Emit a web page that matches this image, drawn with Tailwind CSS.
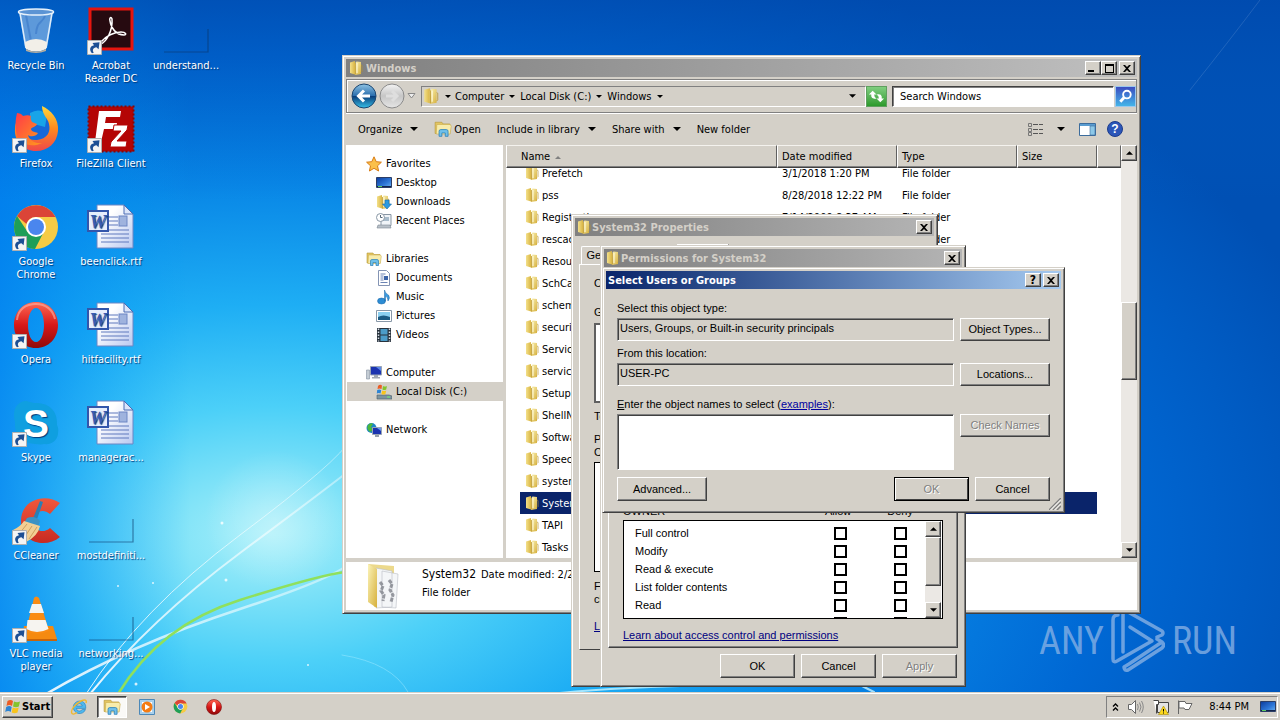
<!DOCTYPE html>
<html lang="en">
<head>
  <meta charset="UTF-8" />
  <meta name="viewport" content="width=device-width, initial-scale=1" />
  <title>Desktop</title>
  <script src="https://cdn.jsdelivr.net/npm/@tailwindcss/browser@4"></script>
</head>
<body class="relative flex h-screen flex-col overflow-hidden bg-[#0a78dc] font-['DejaVu_Sans_Condensed',sans-serif] text-[11px] leading-[13px] text-black">

  <!-- icon sprite -->
  <svg class="absolute size-0" aria-hidden="true">
    <defs>
      <linearGradient id="gFolder" x1="0" y1="0" x2="1" y2="0"><stop offset="0" stop-color="#f3e08a"/><stop offset="1" stop-color="#d9b544"/></linearGradient>
      <linearGradient id="gFolder2" x1="0" y1="0" x2="1" y2="1"><stop offset="0" stop-color="#fbf3b8"/><stop offset="1" stop-color="#d6b03c"/></linearGradient>
      <linearGradient id="gDoc" x1="0" y1="0" x2="1" y2="1"><stop offset="0.3" stop-color="#fff"/><stop offset="1" stop-color="#b9c8f0"/></linearGradient>
      <linearGradient id="gScreen" x1="0" y1="0" x2="1" y2="1"><stop offset="0" stop-color="#0a3a9c"/><stop offset="0.6" stop-color="#2f78d8"/><stop offset="1" stop-color="#6fb4f0"/></linearGradient>
      <linearGradient id="gOpera" x1="0" y1="0" x2="0" y2="1"><stop offset="0" stop-color="#ff6a55"/><stop offset="0.5" stop-color="#d81818"/><stop offset="1" stop-color="#8f0a0a"/></linearGradient>
    </defs>
    <symbol id="folder" viewBox="0 0 16 16">
      <path d="M2 2.500 7 1v13.500L2 13z" fill="url(#gFolder)"/>
      <path d="M7 3.500 8.500 1.500 13 2v12l-6 1z" fill="url(#gFolder2)"/>
      <path d="M7.500 3v11.500M13 5l1 .5v6l-1 1" stroke="#b8922c" stroke-width=".7" fill="none"/>
      <path d="M9 3v10" stroke="#fffbe0" stroke-width="1"/>
    </symbol>
    <symbol id="library" viewBox="0 0 16 16">
      <path d="M1 2h6l1 1.500h6V12H1z" fill="#e3c562" stroke="#b79a3a" stroke-width=".6"/>
      <path d="M2.500 4h12l.8 1.500-1 7H2z" fill="#f7ecac" stroke="#c8aa48" stroke-width=".5"/>
      <path d="M4.500 14.500V10q0-1.500 1.500-1.500h5q1.500 0 1.500 1.500v4.500H10v-3H7v3z" fill="#6fc0ea" stroke="#2a80b8" stroke-width=".7"/>
    </symbol>
    <symbol id="shortcut" viewBox="0 0 15 15">
      <path d="M.5.5h14v14H.5z" fill="#f4f4f4" stroke="#b0b0b0"/>
      <path d="M5 13.200C1.800 9.500 3 6 7 5.200L5.500 3l7-.8-.9 7-2.200-2C6 7.800 5 10 6.800 12.800z" fill="#1d4f94"/>
    </symbol>
    <symbol id="word" viewBox="0 0 48 48">
      <path d="M10 2h27l9 9v34H10z" fill="url(#gDoc)" stroke="#6d86c4" stroke-width="1"/>
      <path d="M37 2v9h9z" fill="#dbe5fa" stroke="#4d6cb4" stroke-width="1"/>
      <path d="M22 14h9M22 18h9M22 22h9M14 27h28M14 31h28M14 35h28M14 39h28" stroke="#5f78bd" stroke-width="1"/>
      <rect x="32" y="13" width="8" height="10" fill="#9fb3de" stroke="#6d86c4"/>
      <path d="M1 8h20v20H1z" fill="#e6edfc" stroke="#3356ab" stroke-width="2"/>
      <text x="11" y="25" text-anchor="middle" font-family="Liberation Serif, serif" font-weight="700" font-style="italic" font-size="19" fill="#3a5bb0">W</text>
    </symbol>
    <symbol id="ghost" viewBox="0 0 48 48">
      <path d="M2 45h44V22" fill="none" stroke="#0b3566" stroke-opacity=".55" stroke-width="1.200"/>
    </symbol>
    <symbol id="chrome" viewBox="0 0 48 48">
      <circle cx="24" cy="24" r="22" fill="#f6cb45"/>
      <path d="M5 13A22 22 0 0 1 43.500 14H24a10 10 0 0 0-9.500 7z" fill="#db4437"/>
      <path d="M5 13A22 22 0 0 0 23 46l9-17.500A10 10 0 0 1 15 28z" fill="#1e9e58"/>
      <circle cx="24" cy="24" r="10" fill="#fff"/>
      <circle cx="24" cy="24" r="8" fill="#4a86ee"/>
    </symbol>
    <symbol id="monitor" viewBox="0 0 16 16">
      <path d="M.5 2.500h15v10H.5z" fill="url(#gScreen)" stroke="#2c3e66"/>
      <path d="M1 11h14v1H1z" fill="#14244c"/><path d="M2 11h4v1H2z" fill="#5ecf60"/>
    </symbol>
    <symbol id="down" viewBox="0 0 8 4"><path d="M0 0h8L4 4z"/></symbol>
    <symbol id="close" viewBox="0 0 8 7"><path d="M0 0h2l2 2 2-2h2L5 3.500 8 7H6L4 5 2 7H0l3-3.500z"/></symbol>
  </svg>

  <!-- wallpaper -->
  <svg class="absolute inset-0 size-full" viewBox="0 0 1280 720" preserveAspectRatio="none" aria-hidden="true">
    <defs>
      <radialGradient id="sky" gradientUnits="userSpaceOnUse" cx="0" cy="0" r="1" gradientTransform="translate(270 535) scale(1120 640)">
        <stop offset="0" stop-color="#a8f0fa"/><stop offset=".08" stop-color="#84e4f8"/><stop offset=".2" stop-color="#4cd0f8"/><stop offset=".36" stop-color="#1eaef4"/><stop offset=".55" stop-color="#0886e6"/><stop offset=".75" stop-color="#0068d4"/><stop offset="1" stop-color="#0050b4"/>
      </radialGradient>
      <linearGradient id="leftSide"><stop offset="0" stop-color="#0080f0" stop-opacity=".75"/><stop offset="1" stop-color="#00a0f8" stop-opacity="0"/></linearGradient>
      <linearGradient id="topSide" x2="0" y2="1"><stop offset="0" stop-color="#0048ac" stop-opacity=".6"/><stop offset="1" stop-color="#0060c8" stop-opacity="0"/></linearGradient>
      <linearGradient id="ray" x1="0" y1="1" x2="1" y2="0"><stop offset="0" stop-color="#fff" stop-opacity=".9"/><stop offset="1" stop-color="#fff" stop-opacity=".4"/></linearGradient>
      <radialGradient id="orb"><stop offset="0" stop-color="#fff" stop-opacity=".3"/><stop offset="1" stop-color="#fff" stop-opacity="0"/></radialGradient>
    </defs>
    <path fill="url(#sky)" d="M0 0h1280v720H0z"/>
    <path fill="url(#leftSide)" d="M0 0h190v720H0z"/>
    <path fill="url(#topSide)" d="M0 0h1280v200H0z"/>
    <circle cx="275" cy="520" r="70" fill="url(#orb)"/>
    <g fill="none" stroke-linecap="round">
      <path d="M46 694Q130 645 240 609T350 560" stroke="url(#ray)" stroke-width="2.500"/>
      <path d="M86 694Q140 610 240 535T350 440" stroke="url(#ray)" stroke-width="1"/>
      <path d="M90 694Q150 620 240 553T350 470" stroke="url(#ray)" stroke-width="2"/>
      <path d="M118 694Q160 625 240 600T345 572" stroke="#8fe05c" stroke-width="2.500"/>
      <path d="M342 655q50 8 66 37" stroke="#9feaff" stroke-opacity=".5" stroke-width="1"/>
      <path d="M1190 90q40-50 70-90" stroke="#fff" stroke-opacity=".12"/>
      <path d="M560 693q60-6 160-8M850 680l24 12" stroke="#c8f4ff" stroke-opacity=".8" stroke-width="2"/>
    </g>
    <g fill="#fff" fill-opacity=".8"><circle cx="222" cy="523" r="1.500"/><circle cx="226" cy="580" r="1.500"/><circle cx="136" cy="684" r="1.500"/><circle cx="118" cy="586" r="1"/><circle cx="153" cy="583" r="1"/><circle cx="308" cy="665" r="1"/></g>
  </svg>

  <!-- desktop -->
  <main class="relative min-h-0 flex-1">
    <ul class="grid w-max auto-cols-[72px] grid-flow-col grid-rows-[repeat(7,98px)] gap-x-[3px] text-white [text-shadow:1px_1px_1px_#003878]">
      <li><a href="#" class="flex flex-col items-center pt-[7px] text-center">
        <span class="relative mb-1 block size-12">
          <svg class="size-12" viewBox="0 0 48 48">
            <path d="M7 5h34l-6 36q-11 5-22 0z" fill="#a9c8ea" fill-opacity=".55"/>
            <path d="M8 6l6 35M40 6l-6 35" stroke="#dcecfa" stroke-width="1.500" fill="none"/>
            <path d="M14 8l5 26M33 9c-3 8-8 4-9 18" stroke="#3a78c8" stroke-opacity=".6" stroke-width="2" fill="none"/>
            <ellipse cx="24" cy="5" rx="17.500" ry="3" fill="#5c94d4" stroke="#e6f1fb" stroke-width="1.500"/>
            <path d="M13 35q11-6 22 0l-1 7q-10 5-20 0z" fill="#f2efe8"/>
            <path d="M14 42q10 5 20 0v2q-10 4-20 0z" fill="#b4ada0"/>
          </svg>
        </span>Recycle Bin</a></li>
      <li><a href="#" class="flex flex-col items-center pt-[7px] text-center">
        <span class="relative mb-1 block size-12">
          <svg class="size-12" viewBox="0 0 48 48">
            <defs><linearGradient id="ffBody" x2="0" y2="1"><stop offset="0" stop-color="#ffd83a"/><stop offset=".5" stop-color="#ff8a1e"/><stop offset="1" stop-color="#f0484a"/></linearGradient><linearGradient id="ffFace" x2="1" y2="1"><stop offset="0" stop-color="#ff3a48"/><stop offset="1" stop-color="#ff9a1c"/></linearGradient></defs>
            <circle cx="25" cy="22" r="16" fill="#1668d8"/><path d="M18 8q10-6 17 2l-2 12-15-4z" fill="#18a4e8"/>
            <path d="M30 1c9 4 17 13 16 25C45 38 36 46 24 46 11 46 2 36 3 24c0-4 1-6 2-9 4 14 10 21 20 20 10-1 14-8 12-16-1-6-7-9-7-18z" fill="url(#ffBody)"/>
            <path d="M5 8c2 0 5 1 6 3 3-1 6-1 8 0-1 2 0 4 1 6l5 2c-1 3-5 3-6 5 0 2 3 3 7 4-2 4-8 4-10 2 1 5 7 9 14 8-12 6-24 0-26-12C3 19 4 12 5 8z" fill="url(#ffFace)"/>
          </svg>
          <svg class="absolute bottom-0 left-0 size-[15px]"><use href="#shortcut"/></svg>
        </span>Firefox</a></li>
      <li><a href="#" class="flex flex-col items-center pt-[7px] text-center">
        <span class="relative mb-1 block size-12">
          <svg class="size-12"><use href="#chrome"/></svg>
          <svg class="absolute bottom-0 left-0 size-[15px]"><use href="#shortcut"/></svg>
        </span>Google<br />Chrome</a></li>
      <li><a href="#" class="flex flex-col items-center pt-[7px] text-center">
        <span class="relative mb-1 block size-12">
          <svg class="size-12" viewBox="0 0 48 48">
            <path fill="url(#gOpera)" fill-rule="evenodd" d="M24 1c13 0 22 10 22 23S37 47 24 47 2 37 2 24 11 1 24 1zm0 6c-5 0-8 8-8 17s3 17 8 17 8-8 8-17-3-17-8-17z"/>
            <path d="M5 19C6 8 14 3 24 3s17 6 19 15" fill="none" stroke="#ffb4a4" stroke-opacity=".6" stroke-width="2"/>
          </svg>
          <svg class="absolute bottom-0 left-0 size-[15px]"><use href="#shortcut"/></svg>
        </span>Opera</a></li>
      <li><a href="#" class="flex flex-col items-center pt-[7px] text-center">
        <span class="relative mb-1 block size-12">
          <svg class="size-12" viewBox="0 0 48 48">
            <path d="M13 2c4 0 6 2 11 2 14 0 22 9 21 22 2 4 1 7 1 9-1 7-7 11-14 10-3 1-6 0-9 0C9 44 2 35 3 23 0 12 4 3 13 2z" fill="#0f9fe0"/>
            <text x="24" y="38" text-anchor="middle" font-family="Liberation Sans, sans-serif" font-weight="700" font-size="39" fill="#fff">S</text>
          </svg>
          <svg class="absolute bottom-0 left-0 size-[15px]"><use href="#shortcut"/></svg>
        </span>Skype</a></li>
      <li><a href="#" class="flex flex-col items-center pt-[7px] text-center">
        <span class="relative mb-1 block size-12">
          <svg class="size-12" viewBox="0 0 48 48">
            <defs><linearGradient id="cc" x2="0" y2="1"><stop offset="0" stop-color="#f0583c"/><stop offset="1" stop-color="#c82a22"/></linearGradient></defs>
            <path d="M48 6 38 17c-8-7-17-1-17 7s9 14 17 7l10 9C34 52 9 46 9 24S34-4 48 6z" fill="url(#cc)"/>
            <path d="M28 4l3 1-7 20-4-1z" fill="#2a7fb4"/>
            <path d="M15 21q8-3 13 3l-2 6-14-4z" fill="#3c92c4"/>
            <path d="M12 24l16 5q-2 10-14 16L1 33q7-3 11-9z" fill="#f2cf94"/><path d="M15 27l-8 10M20 29l-8 12M25 30l-8 12" stroke="#cf9f5c"/>
          </svg>
          <svg class="absolute bottom-0 left-0 size-[15px]"><use href="#shortcut"/></svg>
        </span>CCleaner</a></li>
      <li><a href="#" class="flex flex-col items-center pt-[7px] text-center">
        <span class="relative mb-1 block size-12">
          <svg class="size-12" viewBox="0 0 48 48">
            <path d="M12 31h29l4 13q0 2-2 2H10z" fill="#f58a10"/><path d="M10 44h35v2H10z" fill="#c8640a"/>
            <path d="M22 3q2-3 5 0l10 33q-12 6-23 0z" fill="#fa8c14"/>
            <path d="M20 9h9l3 9H17zM15.500 25h18l3 9q-12 6-22 0z" fill="#f6f4f0"/>
          </svg>
          <svg class="absolute bottom-0 left-0 size-[15px]"><use href="#shortcut"/></svg>
        </span>VLC media<br />player</a></li>
      <li><a href="#" class="flex flex-col items-center pt-[7px] text-center">
        <span class="relative mb-1 block size-12">
          <svg class="size-12" viewBox="0 0 48 48">
            <path d="M3 2h42v40H3z" fill="#260a10" stroke="#e5150f" stroke-width="3"/>
            <path d="M14 37c5-2 12-13 11-25-1-3-3-1-2 2 1 7 6 14 14 14 3 0 2-3-3-3-7 0-15 4-20 10-2 3 0 3 0 2z" fill="none" stroke="#fff" stroke-width="1.500"/>
          </svg>
          <svg class="absolute bottom-0 left-0 size-[15px]"><use href="#shortcut"/></svg>
        </span>Acrobat<br />Reader DC</a></li>
      <li><a href="#" class="flex flex-col items-center pt-[7px] text-center whitespace-nowrap">
        <span class="relative mb-1 block size-12">
          <svg class="size-12" viewBox="0 0 48 48">
            <path d="M1.500 1.500h45v45h-45z" fill="#b40505" stroke="#8c0404" stroke-width="2" stroke-dasharray="2 2"/>
            <path d="M12 6h22l-1 6H19l-1 6h12l-1 6H17l-3 13H8z" fill="#fff"/><path d="M27 20h14l-1 5-10 11h10l-1 6H23l1-5 10-11h-8z" fill="#fff" stroke="#b40505"/>
          </svg>
          <svg class="absolute bottom-0 left-0 size-[15px]"><use href="#shortcut"/></svg>
        </span>FileZilla Client</a></li>
      <li><a href="#" class="flex flex-col items-center pt-[7px] text-center"><svg class="mb-1 size-12"><use href="#word"/></svg>beenclick.rtf</a></li>
      <li><a href="#" class="flex flex-col items-center pt-[7px] text-center"><svg class="mb-1 size-12"><use href="#word"/></svg>hitfacility.rtf</a></li>
      <li><a href="#" class="flex flex-col items-center pt-[7px] text-center"><svg class="mb-1 size-12"><use href="#word"/></svg>managerac...</a></li>
      <li><a href="#" class="flex flex-col items-center pt-[7px] text-center"><svg class="mb-1 size-12"><use href="#ghost"/></svg>mostdefiniti...</a></li>
      <li><a href="#" class="flex flex-col items-center pt-[7px] text-center"><svg class="mb-1 size-12"><use href="#ghost"/></svg>networking...</a></li>
      <li><a href="#" class="flex flex-col items-center pt-[7px] text-center"><svg class="mb-1 size-12"><use href="#ghost"/></svg>understand...</a></li>
    </ul>

    <!-- watermark -->
    <div class="absolute top-[608px] left-[1039px] flex items-center gap-[7px] font-['Roboto_Condensed','Roboto',sans-serif] text-[38px] leading-[66px] text-[#86b0e4]/80">
      <span>ANY</span>
      <svg class="h-[66px] w-[54px]" viewBox="0 0 54 66" fill="none" stroke="#86b0e4" stroke-opacity=".8" stroke-width="3.500" stroke-linejoin="round" stroke-linecap="round">
        <path d="M7 7q-5 0-5 5v39q0 4 4 2l35-20-22-14"/>
        <path d="M12 44V7q0-6 5-3l34 19q2 2 0 4l-5 2M51 34 18 56l-5 3q0 4 4 3l34-22q3-3 0-6l-5-3"/>
      </svg>
      <span>RUN</span>
    </div>

    <!-- explorer window -->
    <section aria-label="Windows" class="absolute top-[55px] left-[342px] flex h-[559px] w-[799px] flex-col border border-t-[#d4d0c8] border-r-[#404040] border-b-[#404040] border-l-[#d4d0c8] bg-[#d4d0c8] p-[3px] shadow-[inset_1px_1px_0_#fff,inset_-1px_-1px_0_#808080]">
      <header class="flex h-[18px] shrink-0 items-center gap-[2px] bg-linear-to-r from-[#808080] to-[#c0c0c0] px-[2px] font-bold text-[#d4d0c8]">
        <svg class="size-4"><use href="#folder"/></svg>
        <h1 class="flex-1">Windows</h1>
        <div class="flex">
          <button aria-label="Minimize" class="flex h-[14px] w-4 items-end justify-center border border-t-white border-r-[#404040] border-b-[#404040] border-l-white bg-[#d4d0c8] pb-[2px] shadow-[inset_-1px_-1px_0_#808080]"><span class="mr-1 h-[2px] w-[6px] bg-black"></span></button>
          <button aria-label="Maximize" class="flex h-[14px] w-4 items-center justify-center border border-t-white border-r-[#404040] border-b-[#404040] border-l-white bg-[#d4d0c8] shadow-[inset_-1px_-1px_0_#808080]"><span class="h-[9px] w-[9px] border border-t-2 border-black"></span></button>
          <button aria-label="Close" class="ml-[2px] flex h-[14px] w-4 items-center justify-center border border-t-white border-r-[#404040] border-b-[#404040] border-l-white bg-[#d4d0c8] shadow-[inset_-1px_-1px_0_#808080]"><svg class="h-[7px] w-2"><use href="#close"/></svg></button>
        </div>
      </header>

      <nav aria-label="Address" class="mt-[2px] flex h-[34px] shrink-0 items-center border border-[#808080] pl-1 shadow-[inset_1px_1px_0_#fff,0_1px_0_#fff]">
        <button aria-label="Back" class="size-[26px]">
          <svg class="size-[26px]" viewBox="0 0 26 26">
            <defs><linearGradient id="gBack" x2="0" y2="1"><stop offset="0" stop-color="#8fc4e4"/><stop offset=".48" stop-color="#2c6fae"/><stop offset=".52" stop-color="#0a3f7c"/><stop offset="1" stop-color="#38c0e8"/></linearGradient></defs>
            <circle cx="13" cy="13" r="12" fill="url(#gBack)" stroke="#1c4670"/><path d="M19 13H8M13 7.500 7.500 13l5.500 5.500" fill="none" stroke="#fff" stroke-width="3"/>
          </svg>
        </button>
        <button aria-label="Forward" disabled class="ml-[2px] size-[26px]">
          <svg class="size-[26px]" viewBox="0 0 26 26"><defs><linearGradient id="gFwd" x2="0" y2="1"><stop offset="0" stop-color="#f4f4f4"/><stop offset=".5" stop-color="#c6c6c6"/><stop offset="1" stop-color="#e6e6e6"/></linearGradient></defs><circle cx="13" cy="13" r="12" fill="url(#gFwd)" stroke="#8a8a8a"/><path d="M7 13h11M13 8l5 5-5 5" fill="none" stroke="#dedede" stroke-width="3"/></svg>
        </button>
        <button aria-label="Recent pages" class="ml-[2px] w-[9px]"><svg class="h-[6px] w-[9px]" viewBox="0 0 9 6"><path d="M1 .5h7L4.500 5z" fill="#eee" stroke="#888"/></svg></button>
        <div class="ml-[5px] flex h-[21px] flex-1 items-center border border-t-[#808080] border-r-white border-b-white border-l-[#808080]">
          <svg class="size-[18px]"><use href="#folder"/></svg>
          <svg class="mr-1 ml-[5px] h-[3px] w-[6px]"><use href="#down"/></svg>
          <a href="#">Computer</a>
          <svg class="mx-[5px] h-[3px] w-[6px]"><use href="#down"/></svg>
          <a href="#">Local Disk (C:)</a>
          <svg class="mx-[5px] h-[3px] w-[6px]"><use href="#down"/></svg>
          <a href="#">Windows</a>
          <svg class="mx-[5px] h-[3px] w-[6px]"><use href="#down"/></svg>
          <button aria-label="Previous locations" class="mr-[9px] ml-auto"><svg class="h-1 w-[7px]"><use href="#down"/></svg></button>
        </div>
        <button aria-label="Refresh" class="size-[21px] border border-[#5f9f5f] bg-linear-to-b from-[#7fce7f] to-[#2a9a2a]">
          <svg class="size-[19px]" viewBox="0 0 20 20"><path d="M4.500 10V8H2l4-4 4 4H7.500q0 3 2.500 4-5 1-5.500-2zM15.500 10v2H18l-4 4-4-4h2.500q0-3-2.500-4 5-1 5.500 2z" fill="#fff"/></svg>
        </button>
        <input type="text" aria-label="Search" value="Search Windows" class="ml-[5px] h-[21px] w-[222px] border border-t-[#404040] border-r-white border-b-white border-l-[#404040] bg-white px-[7px] shadow-[inset_1px_1px_0_#808080] outline-none" />
        <button aria-label="Search" class="ml-[1px] size-[21px] border border-[#9cc8ec] bg-linear-to-b from-[#3c4cc0] to-[#44b4e8]">
          <svg class="size-[19px]" viewBox="0 0 20 20" fill="none" stroke="#fff"><circle cx="11.500" cy="8" r="4" stroke-width="2"/><path d="m8.500 11-4 4.500" stroke-width="3"/></svg>
        </button>
      </nav>

      <div class="flex h-8 shrink-0 items-center pr-[14px] pl-3">
        <button class="flex items-center gap-2">Organize <svg class="h-1 w-2"><use href="#down"/></svg></button>
        <button class="ml-4 flex items-center gap-[2px]"><svg class="size-[18px]"><use href="#library"/></svg>Open</button>
        <button class="ml-4 flex items-center gap-2">Include in library <svg class="h-1 w-2"><use href="#down"/></svg></button>
        <button class="ml-4 flex items-center gap-2">Share with <svg class="h-1 w-2"><use href="#down"/></svg></button>
        <button class="ml-4">New folder</button>
        <button aria-label="Change view" class="ml-auto flex items-center gap-[13px]">
          <svg class="size-4" viewBox="0 0 16 16" fill="none" stroke="#777"><path d="M.5 2.500h3v3h-3zM.5 7.500h3v3h-3zM.5 11.500h3v3h-3z"/><path d="M5 3.500h5M11 3.500h4M5 8.500h5M11 8.500h4M5 12.500h5M11 12.500h4" stroke="#555"/></svg>
          <svg class="h-1 w-2"><use href="#down"/></svg>
        </button>
        <button aria-label="Preview pane" class="ml-[14px]"><svg class="size-[17px]" viewBox="0 0 17 17"><path d="M.5 2.500h16v12H.5z" fill="#fff" stroke="#3c6c9c"/><path d="M1 3h15v2H1z" fill="#5a9cd0"/><path d="M11 5h5v9h-5z" fill="#8cc8e8" stroke="#3c6c9c" stroke-width=".6"/></svg></button>
        <button aria-label="Help" class="ml-[11px]"><svg class="size-4" viewBox="0 0 16 16"><circle cx="8" cy="8" r="7.500" fill="#2c56b8" stroke="#1c3c8c"/><text x="8" y="12" text-anchor="middle" font-family="Liberation Sans, sans-serif" font-weight="700" font-size="12" fill="#fff">?</text></svg></button>
      </div>

      <div class="flex min-h-0 flex-1">
        <aside class="w-[157px] shrink-0 overflow-hidden bg-white pt-[9px] pl-px leading-[19px]">
          <ul class="mb-[19px]">
            <li class="flex items-center gap-1 pl-[19px]"><svg class="size-4" viewBox="0 0 16 16"><path d="m8 .8 2.200 4.900 5.200.5-3.900 3.600 1.100 5.200L8 12.300 3.400 15l1.100-5.200L.6 6.200l5.200-.5z" fill="#fbc04a" stroke="#d87c14"/></svg><a href="#">Favorites</a></li>
            <li class="flex items-center gap-1 pl-[29px]"><svg class="size-4"><use href="#monitor"/></svg><a href="#">Desktop</a></li>
            <li class="flex items-center gap-1 pl-[29px]"><svg class="size-4" viewBox="0 0 16 16"><use href="#folder" width="16" height="16" x="-1"/><path d="M9 6h4v4h2.500L11 15l-4.500-5H9z" fill="#2c9ae0" stroke="#1468a8" stroke-width=".6"/></svg><a href="#">Downloads</a></li>
            <li class="flex items-center gap-1 pl-[29px]"><svg class="size-4" viewBox="0 0 16 16"><path d="M5 1.500h10v11H5z" fill="#f0f4f8" stroke="#8896a4"/><path d="M7 4h6v4H7z" fill="#a8bccc"/><path d="M2 12h12l1 3H1z" fill="#b8c0c8" stroke="#7c8894" stroke-width=".6"/><circle cx="4.500" cy="4.500" r="4" fill="#fff" stroke="#8896a4"/><path d="M4.500 2v2.500h2" fill="none" stroke="#567"/></svg><a href="#">Recent Places</a></li>
          </ul>
          <ul class="mb-[19px]">
            <li class="flex items-center gap-1 pl-[19px]"><svg class="size-4"><use href="#library"/></svg><a href="#">Libraries</a></li>
            <li class="flex items-center gap-1 pl-[29px]"><svg class="size-4" viewBox="0 0 16 16"><path d="M2.500.5h8l3 3v12h-11z" fill="#fff" stroke="#8494b4"/><path d="M4.500 4h5M4.500 6h3M4.500 8h3M4.500 10h3M4.500 12.500h7" stroke="#6c84b4"/><path d="M8 6h4v4H8z" fill="#3c64a8"/></svg><a href="#">Documents</a></li>
            <li class="flex items-center gap-1 pl-[29px]"><svg class="size-4" viewBox="0 0 16 16"><ellipse cx="5.500" cy="12" rx="4" ry="3" fill="#2c8cd4" stroke="#1864a4" stroke-width=".5"/><path d="M8.500 12V1q1 4 4 5 2 3-.5 6 0-4-2.500-5v5z" fill="#3c9ce0" stroke="#1864a4" stroke-width=".5"/></svg><a href="#">Music</a></li>
            <li class="flex items-center gap-1 pl-[29px]"><svg class="size-4" viewBox="0 0 16 16"><path d="M.5 2.500h15v11H.5z" fill="#fff" stroke="#8898a8"/><path d="M2 4h12v8H2z" fill="#8cd0f0"/><path d="M2 9q5-3 12 0v3H2z" fill="#1c5c84"/></svg><a href="#">Pictures</a></li>
            <li class="flex items-center gap-1 pl-[29px]"><svg class="size-4" viewBox="0 0 16 16"><path d="M1 1h14v14H1z" fill="#28323c"/><path d="M4.500 2h7v5.500h-7zM4.500 8.500h7V14h-7z" fill="#4c9cc8"/><path d="M2.500 1.500v13M13.500 1.500v13" stroke="#d8e0e8" stroke-width="1.500" stroke-dasharray="1.500 1.500"/></svg><a href="#">Videos</a></li>
          </ul>
          <ul class="mb-[19px]">
            <li class="flex items-center gap-1 pl-[19px]"><svg class="size-4" viewBox="0 0 16 16"><path d="M.5 5h3v9h-3z" fill="#c4ccd4" stroke="#8490a0" stroke-width=".6"/><path d="M4.500 1.500h11v8.500h-11z" fill="#1c34b0" stroke="#98a4b4"/><path d="M10 2h5v4z" fill="#5c88e8"/><path d="M8 10h4v2h2v1.500H6V12h2z" fill="#a0a8b4"/></svg><a href="#">Computer</a></li>
            <li class="flex items-center gap-1 bg-[#d4d0c8] pl-[29px]"><svg class="size-4" viewBox="0 0 16 16"><path d="M1 11h12l3 1v3H1z" fill="#7c94a0" stroke="#4c5c68" stroke-width=".6"/><path d="M11 13h3" stroke="#6cf06c"/><path d="M2 2q2-2 4-.5L5.500 5Q3.500 4 1.500 5z" fill="#ec5c24"/><path d="M7 2q2 1 4 0l-.8 3.500q-2 1-3.800 0z" fill="#84c42c"/><path d="M1.200 6q2-1 4 .2L4.500 9.500Q3 8.500.8 9.500z" fill="#2c84d4"/><path d="M6.200 6.500q2 1 4 0l-.8 3.500q-2 1-4 0z" fill="#f8c41c"/></svg><a href="#">Local Disk (C:)</a></li>
          </ul>
          <ul>
            <li class="flex items-center gap-1 pl-[19px]"><svg class="size-4" viewBox="0 0 16 16"><circle cx="5.500" cy="6" r="5" fill="#1c84c8"/><path d="M2 3q3-3 5-1L5 5l2 3-3 2Q0 7 2 3z" fill="#4cb83c"/><path d="M6.500 5.500h9v7h-9z" fill="#1c34b0" stroke="#98a4b4"/><path d="M11 6h4v3z" fill="#6c9cf0"/><path d="M9 13h4v2H9z" fill="#98a0ac"/></svg><a href="#">Network</a></li>
          </ul>
        </aside>
        <div class="w-[3px] shrink-0 bg-[#d4d0c8]"></div>
        <div class="min-w-0 flex-1 overflow-hidden bg-white">
          <table class="-mt-[6px] w-full table-fixed border-separate border-spacing-0">
            <colgroup><col class="w-[14px]"><col class="w-[257px]"><col class="w-[120px]"><col class="w-[120px]"><col class="w-[80px]"><col></colgroup>
            <thead>
              <tr class="text-left">
                <th colspan="2" class="sticky top-0 h-[23px] border border-t-[#f4f2ee] border-r-[#606060] border-b-[#404040] border-l-white bg-[#d4d0c8] pl-[14px] font-normal shadow-[inset_0_-1px_0_#808080]">Name <svg class="ml-[2px] inline h-[3px] w-[6px] rotate-180 fill-[#808080]"><use href="#down"/></svg></th>
                <th class="sticky top-0 border border-t-[#f4f2ee] border-r-[#606060] border-b-[#404040] border-l-white bg-[#d4d0c8] pl-1 font-normal shadow-[inset_0_-1px_0_#808080]">Date modified</th>
                <th class="sticky top-0 border border-t-[#f4f2ee] border-r-[#606060] border-b-[#404040] border-l-white bg-[#d4d0c8] pl-1 font-normal shadow-[inset_0_-1px_0_#808080]">Type</th>
                <th class="sticky top-0 border border-t-[#f4f2ee] border-r-[#606060] border-b-[#404040] border-l-white bg-[#d4d0c8] pl-1 font-normal shadow-[inset_0_-1px_0_#808080]">Size</th>
                <td class="sticky top-0 border border-t-[#f4f2ee] border-r-[#606060] border-b-[#404040] border-l-white bg-[#d4d0c8] shadow-[inset_0_-1px_0_#808080]"></td>
              </tr>
            </thead>
            <tbody id="files"></tbody>
          </table>
        </div>
        <div class="flex w-4 shrink-0 flex-col bg-[#ebe8e4]">
          <button aria-label="Scroll up" class="flex size-4 items-center justify-center border border-t-white border-r-[#404040] border-b-[#404040] border-l-white bg-[#d4d0c8] shadow-[inset_-1px_-1px_0_#808080]"><svg class="h-1 w-[7px] rotate-180"><use href="#down"/></svg></button>
          <div class="flex-[142]"></div>
          <div class="flex-[76] border border-t-white border-r-[#404040] border-b-[#404040] border-l-white bg-[#d4d0c8] shadow-[inset_-1px_-1px_0_#808080]"></div>
          <div class="flex-[163]"></div>
          <button aria-label="Scroll down" class="flex size-4 items-center justify-center border border-t-white border-r-[#404040] border-b-[#404040] border-l-white bg-[#d4d0c8] shadow-[inset_-1px_-1px_0_#808080]"><svg class="h-1 w-[7px]"><use href="#down"/></svg></button>
        </div>
      </div>

      <footer class="mt-1 flex h-[48px] shrink-0 items-start bg-white">
        <svg class="ml-4 size-12" viewBox="0 0 48 48">
          <path d="M6 2l26 2v38l-20 3z" fill="#ecd98c"/>
          <path d="M14 6l16 3v36l-16 1zM20 9l16 3-2 34-14-1z" fill="#f4f6f8" stroke="#b8bcc4" stroke-width=".6"/>
          <path d="M18 20l3 4-2 5 3 4-1 6M27 18l3 4-2 6 3 5-2 7" fill="none" stroke="#70747c" stroke-width="3" stroke-opacity=".7" stroke-dasharray="4 1"/>
          <path d="M6 2l9 5v39l-9-6z" fill="url(#gFolder2)"/>
        </svg>
        <dl class="ml-3 grid gap-[5px] pt-[6px] whitespace-nowrap">
          <div class="flex items-baseline gap-[5px]"><dt class="text-[12px]">System32</dt><dd>Date modified: 2/28/2018 10:13 AM</dd></div>
          <dd>File folder</dd>
        </dl>
      </footer>
    </section>

    <!-- System32 Properties -->
    <section aria-label="System32 Properties" class="absolute top-[214px] left-[571px] flex h-[473px] w-[367px] flex-col border border-t-[#d4d0c8] border-r-[#404040] border-b-[#404040] border-l-[#d4d0c8] bg-[#d4d0c8] p-[3px] font-['Liberation_Sans',sans-serif] shadow-[inset_1px_1px_0_#fff,inset_-1px_-1px_0_#808080]">
      <header class="flex h-[18px] shrink-0 items-center bg-linear-to-r from-[#808080] to-[#b4b4b4] pr-[2px] pl-px font-['DejaVu_Sans_Condensed',sans-serif] font-bold text-[#d4d0c8]">
        <svg class="size-4"><use href="#folder"/></svg>
        <h2 class="flex-1">System32 Properties</h2>
        <button aria-label="Close" class="flex h-[14px] w-4 items-center justify-center border border-t-white border-r-[#404040] border-b-[#404040] border-l-white bg-[#d4d0c8] text-black shadow-[inset_-1px_-1px_0_#808080]"><svg class="h-[7px] w-2"><use href="#close"/></svg></button>
      </header>
      <div role="tablist" class="mt-2 flex h-5 items-end px-[6px]">
        <button role="tab" class="h-[18px] w-[50px] rounded-t-xs border border-b-0 border-t-white border-r-[#404040] border-l-white">General</button>
        <button role="tab" class="h-[18px] w-[46px] border border-b-0 border-t-white border-r-[#404040] border-l-white">Sharing</button>
        <button role="tab" aria-selected="true" class="h-5 w-[52px] border border-b-0 border-t-white border-r-[#404040] border-l-white">Security</button>
      </div>
      <div class="mx-1 flex h-[386px] flex-col border border-t-white border-r-[#404040] border-b-[#404040] border-l-white px-[14px] pt-3">
        <p>Object name:</p>
        <p class="mt-4">Group or user names:</p>
        <div class="mt-1 h-[80px] border-2 border-t-[#606060] border-r-white border-b-[#606060] border-l-[#606060] bg-white"></div>
        <p class="mt-[7px]">To change permissions, click Edit.</p>
        <p class="mt-[10px]">Permissions for<br />CREATOR OWNER</p>
        <div class="mt-[3px] h-[110px] shrink-0 border border-black bg-white"></div>
        <p class="mt-2">For special permissions or advanced settings,<br />click Advanced.</p>
        <a href="#" class="mt-[14px] text-[#000080] underline">Learn about access control and permissions</a>
      </div>
    </section>

    <!-- Permissions for System32 -->
    <section aria-label="Permissions for System32" class="absolute top-[245px] left-[600px] flex h-[442px] w-[366px] flex-col border border-t-[#d4d0c8] border-r-[#404040] border-b-[#404040] border-l-[#d4d0c8] bg-[#d4d0c8] p-[3px] font-['Liberation_Sans',sans-serif] shadow-[inset_1px_1px_0_#fff,inset_-1px_-1px_0_#808080]">
      <header class="flex h-[18px] shrink-0 items-center bg-linear-to-r from-[#808080] to-[#b4b4b4] pr-[2px] pl-px font-['DejaVu_Sans_Condensed',sans-serif] font-bold text-[#d4d0c8]">
        <svg class="size-4"><use href="#folder"/></svg>
        <h2 class="flex-1">Permissions for System32</h2>
        <button aria-label="Close" class="flex h-[14px] w-4 items-center justify-center border border-t-white border-r-[#404040] border-b-[#404040] border-l-white bg-[#d4d0c8] text-black shadow-[inset_-1px_-1px_0_#808080]"><svg class="h-[7px] w-2"><use href="#close"/></svg></button>
      </header>
      <div class="mx-1 mt-7 flex flex-1 flex-col justify-end border border-t-white border-r-[#404040] border-b-[#404040] border-l-white px-[14px] pb-[5px] shadow-[inset_-1px_-1px_0_#808080]">
        <div class="mb-[2px] flex justify-between pr-[30px]"><span>OWNER</span><span class="flex gap-9"><span>Allow</span><span>Deny</span></span></div>
        <div class="flex h-[99px] border border-black bg-white pr-px">
          <div class="flex-1 overflow-hidden pt-[3px]">
            <table class="w-full">
              <tbody id="permissions"></tbody>
            </table>
          </div>
          <div class="flex w-4 flex-col bg-[#ebe8e4]">
            <button aria-label="Scroll up" class="flex size-4 items-center justify-center border border-t-white border-r-[#404040] border-b-[#404040] border-l-white bg-[#d4d0c8] shadow-[inset_-1px_-1px_0_#808080]"><svg class="h-1 w-[7px] rotate-180"><use href="#down"/></svg></button>
            <div class="flex-[48] border border-t-white border-r-[#404040] border-b-[#404040] border-l-white bg-[#d4d0c8] shadow-[inset_-1px_-1px_0_#808080]"></div>
            <div class="flex-[17]"></div>
            <button aria-label="Scroll down" class="flex size-4 items-center justify-center border border-t-white border-r-[#404040] border-b-[#404040] border-l-white bg-[#d4d0c8] shadow-[inset_-1px_-1px_0_#808080]"><svg class="h-1 w-[7px]"><use href="#down"/></svg></button>
          </div>
        </div>
        <a href="#" class="mt-[10px] self-start text-[#000080] underline">Learn about access control and permissions</a>
      </div>
      <div class="mt-[6px] mr-[5px] mb-[5px] flex justify-end gap-[6px]">
        <button class="h-6 w-[75px] border border-t-white border-r-[#404040] border-b-[#404040] border-l-white shadow-[inset_-1px_-1px_0_#808080]">OK</button>
        <button class="h-6 w-[75px] border border-t-white border-r-[#404040] border-b-[#404040] border-l-white shadow-[inset_-1px_-1px_0_#808080]">Cancel</button>
        <button disabled class="h-6 w-[75px] border border-t-white border-r-[#404040] border-b-[#404040] border-l-white text-[#808080] shadow-[inset_-1px_-1px_0_#808080] [text-shadow:1px_1px_0_#fff]">Apply</button>
      </div>
    </section>

    <!-- Select Users or Groups -->
    <section aria-label="Select Users or Groups" class="absolute top-[267px] left-[602px] w-[463px] border border-t-[#d4d0c8] border-r-[#404040] border-b-[#404040] border-l-[#d4d0c8] bg-[#d4d0c8] p-[3px] font-['Liberation_Sans',sans-serif] shadow-[inset_1px_1px_0_#fff,inset_-1px_-1px_0_#808080]">
      <header class="flex h-[18px] items-center gap-[2px] bg-linear-to-r from-[#0a246a] to-[#a6caf0] px-[2px] font-['DejaVu_Sans_Condensed',sans-serif] font-bold text-white">
        <h2 class="flex-1">Select Users or Groups</h2>
        <button aria-label="Help" class="flex h-[14px] w-4 items-center justify-center border border-t-white border-r-[#404040] border-b-[#404040] border-l-white bg-[#d4d0c8] text-[12px] text-black shadow-[inset_-1px_-1px_0_#808080]">?</button>
        <button aria-label="Close" class="flex h-[14px] w-4 items-center justify-center border border-t-white border-r-[#404040] border-b-[#404040] border-l-white bg-[#d4d0c8] text-black shadow-[inset_-1px_-1px_0_#808080]"><svg class="h-[7px] w-2"><use href="#close"/></svg></button>
      </header>
      <form class="grid grid-cols-[1fr_90px] gap-x-[6px] px-[11px] pt-[13px] pb-2" onsubmit="return false">
        <label for="objectType" class="col-span-2 mb-[3px]">Select this object type:</label>
        <input id="objectType" type="text" readonly value="Users, Groups, or Built-in security principals" class="h-[23px] border border-t-[#808080] border-r-white border-b-white border-l-[#808080] px-[2px] pb-1 shadow-[inset_1px_1px_0_#404040] outline-none" />
        <button type="button" class="h-[23px] border border-t-white border-r-[#404040] border-b-[#404040] border-l-white shadow-[inset_-1px_-1px_0_#808080]">Object Types...</button>
        <label for="location" class="col-span-2 mt-[6px] mb-[3px]">From this location:</label>
        <input id="location" type="text" readonly value="USER-PC" class="h-[23px] border border-t-[#808080] border-r-white border-b-white border-l-[#808080] px-[2px] pb-1 shadow-[inset_1px_1px_0_#404040] outline-none" />
        <button type="button" class="h-[23px] border border-t-white border-r-[#404040] border-b-[#404040] border-l-white shadow-[inset_-1px_-1px_0_#808080]">Locations...</button>
        <p class="col-span-2 mt-3 mb-[3px]"><label for="names"><u>E</u>nter the object names to select</label> (<a href="#" class="text-[#0000a0] underline">examples</a>):</p>
        <textarea id="names" class="h-[56px] resize-none border border-t-[#808080] border-r-white border-b-white border-l-[#808080] bg-white p-[2px] shadow-[inset_1px_1px_0_#404040] outline-none"></textarea>
        <button type="button" disabled class="h-[23px] border border-t-white border-r-[#404040] border-b-[#404040] border-l-white text-[#808080] shadow-[inset_-1px_-1px_0_#808080] [text-shadow:1px_1px_0_#fff]">Check Names</button>
        <div class="col-span-2 mt-[7px] flex gap-[6px]">
          <button type="button" class="mr-auto h-6 w-[90px] border border-t-white border-r-[#404040] border-b-[#404040] border-l-white shadow-[inset_-1px_-1px_0_#808080]">Advanced...</button>
          <button type="submit" disabled class="h-6 w-[75px] border border-black text-[#808080] shadow-[inset_1px_1px_0_#fff,inset_-1px_-1px_0_#404040] [text-shadow:1px_1px_0_#fff]">OK</button>
          <button type="button" class="h-6 w-[75px] border border-t-white border-r-[#404040] border-b-[#404040] border-l-white shadow-[inset_-1px_-1px_0_#808080]">Cancel</button>
        </div>
      </form>
      <svg class="absolute right-[3px] bottom-[2px] size-3" viewBox="0 0 12 12"><path d="M0 12 12 0M4 12l8-8M8 12l4-4" stroke="#808080" stroke-width="1.500"/><path d="M1.500 12 12 1.500M5.500 12 12 5.500" stroke="#fff"/></svg>
    </section>
  </main>

  <!-- taskbar -->
  <footer class="relative flex h-7 shrink-0 items-center border-t border-[#d4d0c8] bg-[#d4d0c8] px-[2px] shadow-[inset_0_1px_0_#fff]">
    <button class="flex h-[22px] items-center gap-[1px] border border-t-white border-r-[#404040] border-b-[#404040] border-l-white px-[2px] font-bold shadow-[inset_-1px_-1px_0_#808080]">
      <svg class="size-4" viewBox="0 0 16 16"><path d="M2.500 2q3-2 5.500 0L7 7Q4.500 5 1.500 7z" fill="#ec5c24"/><path d="M9 2.500q3 1.500 6 0l-1.200 5Q11 9 8 7.500z" fill="#84c42c"/><path d="M1.200 8q3-2 5.500 0l-1 5Q3.500 11 .2 13z" fill="#2c84d4"/><path d="M7.700 8.500q3 1.500 6 0l-1.200 5q-3 1.500-5.800 0z" fill="#f8c41c"/></svg>Start</button>
    <nav aria-label="Pinned" class="ml-[17px] flex flex-1 items-center">
      <a href="#" aria-label="Internet Explorer" class="mr-[9px]"><svg class="size-[18px]" viewBox="0 0 18 18"><path d="M9.500 3a6.300 6.300 0 1 0 6 8.500h-3.300q-1 1.600-2.900 1.600-2.700 0-2.900-2.700h9.400Q16.200 3.200 9.500 3zM6.500 8q.4-2.300 2.900-2.300T12.300 8z" fill="#4fb8ee" stroke="#1c7cc0" stroke-width=".6" fill-rule="evenodd"/><path d="M16 5c1-3-1-4-5-2C5 6 0 12 2 15.500c1 1 3 .5 5-1" fill="none" stroke="#f0b830" stroke-width="1.400"/></svg></a>
      <a href="#" aria-label="Windows Explorer" class="flex h-[22px] w-[30px] items-center justify-center border border-t-[#404040] border-r-white border-b-white border-l-[#404040] bg-[#faf9f7] shadow-[inset_1px_1px_0_#808080]"><svg class="size-[18px]"><use href="#library"/></svg></a>
      <a href="#" aria-label="Media Player" class="ml-3"><svg class="size-4" viewBox="0 0 16 16"><path d="M.5.5h15v15H.5z" fill="#a8d0ec" stroke="#4c88b8"/><path d="M3 3h10v10H3z" fill="#fff"/><circle cx="8" cy="8" r="5.500" fill="#f47c14"/><path d="m6 5 5 3-5 3z" fill="#fff"/></svg></a>
      <a href="#" aria-label="Chrome" class="ml-[18px]"><svg class="size-[15px]"><use href="#chrome"/></svg></a>
      <a href="#" aria-label="Opera" class="ml-[18px]"><svg class="size-4" viewBox="0 0 16 16"><circle cx="8" cy="8" r="7.500" fill="url(#gOpera)" stroke="#7c0c0c" stroke-width=".6"/><ellipse cx="8" cy="8" rx="2" ry="5" fill="#fff"/></svg></a>
    </nav>
    <div class="flex h-[22px] items-center border border-t-[#808080] border-r-white border-b-white border-l-[#808080] pr-px pl-[5px]">
      <button aria-label="Show hidden icons"><svg class="h-2 w-[7px]" viewBox="0 0 7 8" fill="none" stroke="#000" stroke-width="1.300"><path d="m1 3.500 2.500-2.500L6 3.500M1 7.500 3.500 5 6 7.500"/></svg></button>
      <svg class="ml-[9px] size-4" viewBox="0 0 16 16" fill="#fff" stroke="#666"><path d="M.5 5.500h3l4-4v13l-4-4h-3z"/><path d="M9.500 5q1.500 3 0 6M11.500 3.500q3 4.500 0 9M13.500 2q3.500 6 0 12" fill="none" stroke="#888"/></svg>
      <svg class="ml-[9px] size-4" viewBox="0 0 16 16"><path d="M4.500 3.500h11v10h-11z" fill="#e4e4e4" stroke="#444"/><path d="M.5 1.500h5v4h-2v9" fill="#fff" stroke="#444"/><path d="m10.500 7 5 8.500h-10z" fill="#fcd81c" stroke="#a88c0c" stroke-width=".6"/><path d="M10.500 10v2.500M10.500 13.500v1" stroke="#000"/></svg>
      <svg class="ml-2 size-4" viewBox="0 0 16 16" fill="#fff" stroke="#666"><path d="M1.500 15V1.500"/><path d="M2 2.500h6l1 2h6l-3 6H8l-1-1.500H2z"/></svg>
      <span class="mr-[11px] ml-4">8:44 PM</span>
      <button aria-label="Show desktop"><svg class="size-4"><use href="#monitor"/></svg></button>
    </div>
  </footer>

  <script>
    const files = [
      ["Prefetch", "3/1/2018 1:20 PM"],
      ["pss", "8/28/2018 12:22 PM"],
      ["Registration", "7/14/2009 8:37 AM"],
      ["rescache", "7/14/2009 8:37 AM"],
      ["Resources", "7/14/2009 8:37 AM"],
      ["SchCache", "7/14/2009 8:37 AM"],
      ["schemas", "7/14/2009 8:37 AM"],
      ["security", "7/14/2009 8:37 AM"],
      ["ServiceProfiles", "7/14/2009 8:37 AM"],
      ["servicing", "7/14/2009 8:37 AM"],
      ["Setup", "7/14/2009 8:37 AM"],
      ["ShellNew", "7/14/2009 8:37 AM"],
      ["SoftwareDistribution", "7/14/2009 8:37 AM"],
      ["Speech", "7/14/2009 8:37 AM"],
      ["system", "7/14/2009 8:37 AM"],
      ["System32", "2/28/2018 10:13 AM", true],
      ["TAPI", "7/14/2009 8:37 AM"],
      ["Tasks", "7/14/2009 8:37 AM"],
    ];
    document.getElementById("files").innerHTML = files.map(([name, date, selected]) => {
      const cell = selected ? "bg-[#0a246a] text-white" : "";
      return `<tr class="h-[22px] whitespace-nowrap">
        <td></td>
        <td class="${cell} pl-1"><span class="flex items-center gap-[2px]"><svg class="size-4"><use href="#folder"/></svg>${name}</span></td>
        <td class="${cell} pl-[5px]">${date}</td>
        <td class="${cell} pl-[5px]">File folder</td>
        <td class="${cell}"></td>
        <td></td>
      </tr>`;
    }).join("");

    const permissions = ["Full control", "Modify", "Read &amp; execute", "List folder contents", "Read", "Write"];
    document.getElementById("permissions").innerHTML = permissions.map((name) => {
      return `<tr class="h-[18px]">
        <td class="pl-[11px]">${name}</td>
        <td class="w-[70px]"><input type="checkbox" aria-label="Allow ${name}" class="mx-auto block size-[13px] appearance-none border-2 border-black bg-white"></td>
        <td class="w-[50px]"><input type="checkbox" aria-label="Deny ${name}" class="mx-auto block size-[13px] appearance-none border-2 border-black bg-white"></td>
      </tr>`;
    }).join("");
  </script>
</body>
</html>
